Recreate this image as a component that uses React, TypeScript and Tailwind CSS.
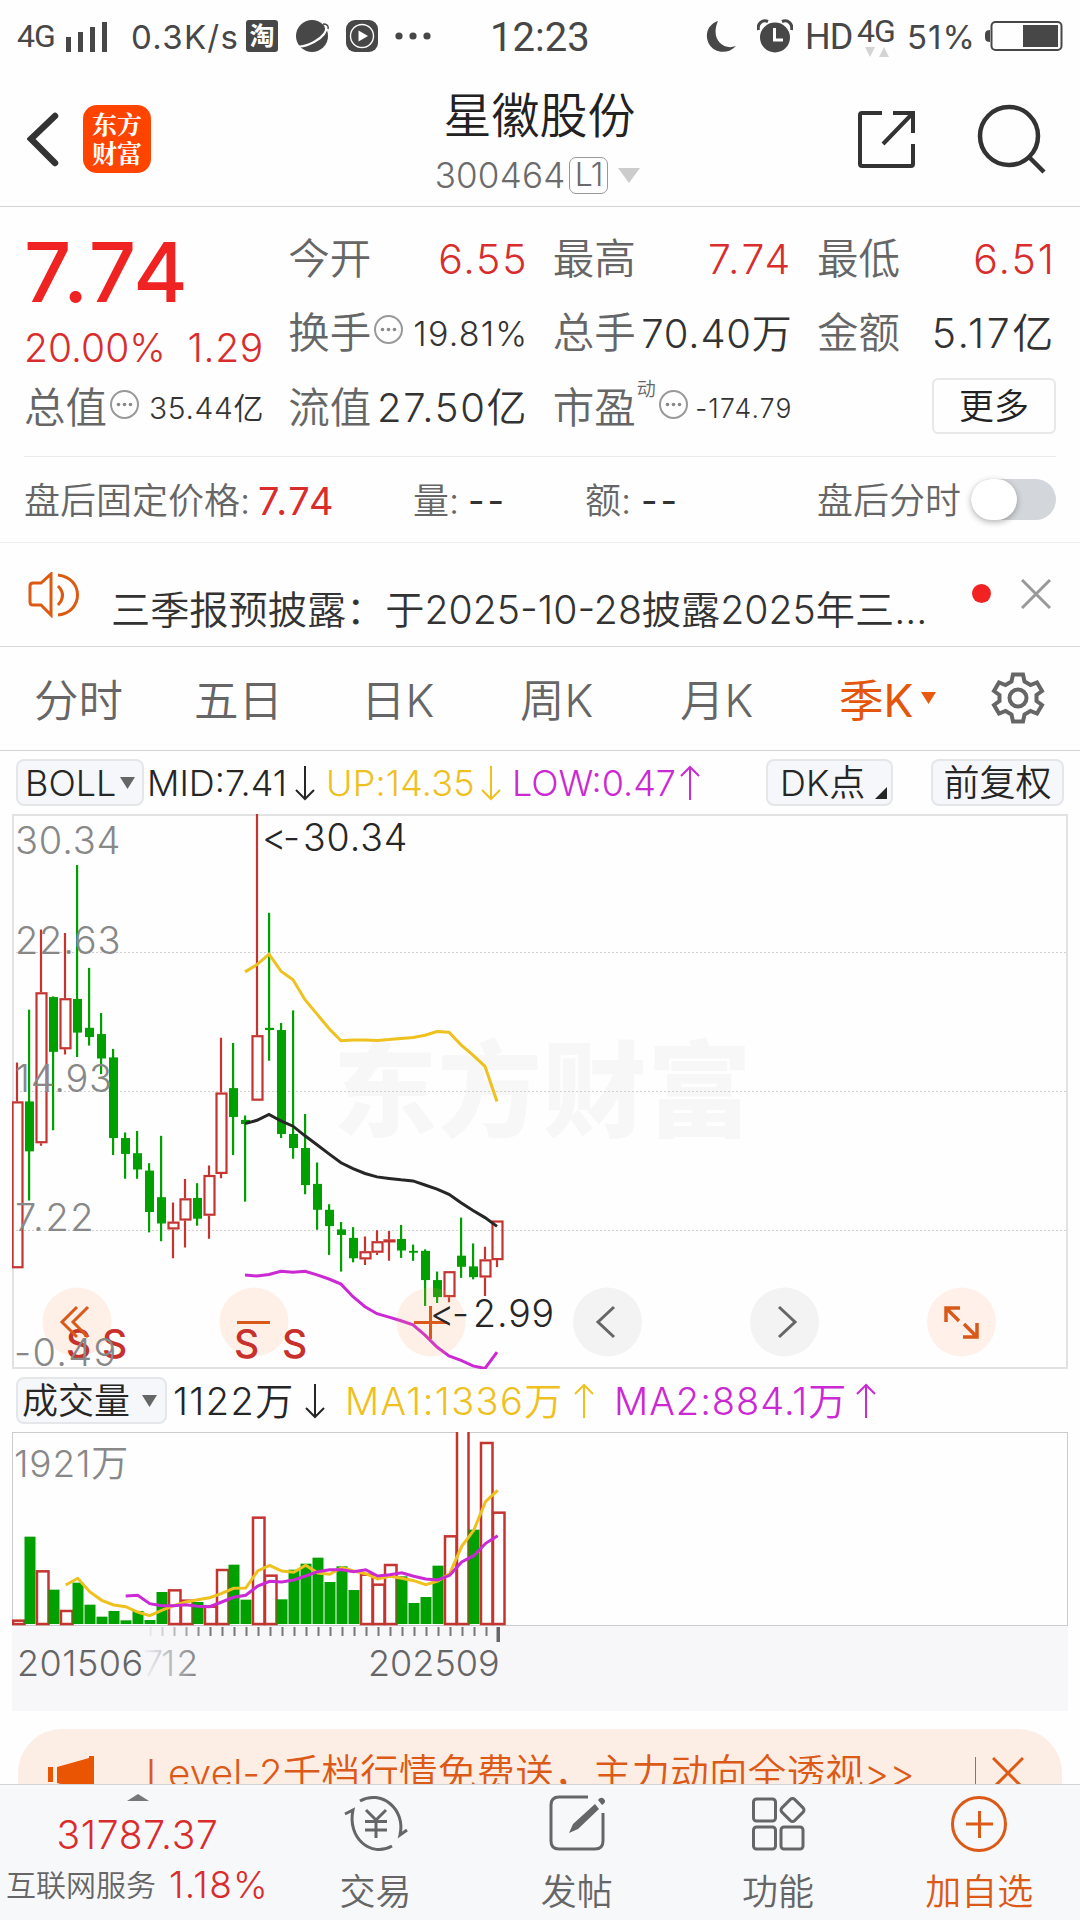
import type { ReactNode } from 'react';
import clsx from 'clsx';

const RED = '#c43431';
const GREEN = '#00a000';
const YELLOW = '#eec11f';
const PURPLE = '#cb29d3';
const ORANGE = '#d9591a';

// [up, high, body top, body bottom, low]
const CANDLES: [number, number, number, number, number][] = [
  [1, 710, 815, 1266, 1266],
  [0, 567, 815, 950, 1083],
  [1, 350, 520, 928, 935],
  [0, 531, 533, 681, 893],
  [1, 360, 536, 674, 688],
  [0, 176, 538, 629, 695],
  [0, 454, 616, 641, 664],
  [0, 576, 633, 699, 741],
  [0, 673, 696, 914, 960],
  [0, 899, 914, 957, 1024],
  [0, 895, 955, 999, 1024],
  [0, 982, 1002, 1114, 1169],
  [0, 908, 1074, 1145, 1193],
  [1, 1088, 1140, 1161, 1239],
  [1, 1025, 1077, 1137, 1210],
  [0, 1036, 1076, 1132, 1151],
  [1, 988, 1014, 1124, 1186],
  [1, 643, 791, 1011, 1023],
  [0, 657, 779, 857, 960],
  [0, 853, 865, 876, 1086],
  [1, 38, 636, 813, 813],
  [0, 305, 616, 622, 705],
  [0, 603, 622, 903, 914],
  [0, 569, 903, 941, 970],
  [0, 849, 941, 1041, 1066],
  [0, 980, 1038, 1108, 1162],
  [0, 1093, 1108, 1152, 1230],
  [0, 1141, 1161, 1176, 1275],
  [0, 1155, 1184, 1239, 1250],
  [1, 1180, 1220, 1242, 1257],
  [1, 1163, 1193, 1224, 1230],
  [1, 1165, 1188, 1195, 1246],
  [0, 1149, 1187, 1218, 1238],
  [0, 1202, 1219, 1224, 1246],
  [0, 1215, 1219, 1298, 1368],
  [0, 1275, 1298, 1344, 1360],
  [1, 1274, 1274, 1344, 1358],
  [0, 1129, 1232, 1262, 1292],
  [0, 1199, 1261, 1290, 1296],
  [1, 1208, 1242, 1291, 1341],
  [1, 1137, 1137, 1244, 1263],
];

const BOLL_START = 19;
const BOLL_UP = [465, 445, 417, 463, 486, 540, 579, 618, 651, 649, 649, 650, 648, 645, 642, 636, 626, 628, 662, 690, 720, 815];
const BOLL_MID = [875, 866, 850, 868, 882, 908, 932, 957, 981, 997, 1010, 1019, 1023, 1027, 1030, 1041, 1052, 1066, 1089, 1110, 1129, 1153];
const BOLL_LOW = [1284, 1287, 1283, 1274, 1277, 1274, 1284, 1295, 1309, 1343, 1370, 1389, 1398, 1408, 1419, 1447, 1479, 1503, 1515, 1530, 1537, 1493];

// [up, bar top]
const VOLUMES: [number, number][] = [
  [1, 750], [0, 501], [1, 602], [0, 660], [1, 721], [0, 639], [0, 705], [0, 741], [0, 724], [0, 752],
  [0, 724], [0, 751], [0, 667], [1, 659], [1, 690], [0, 697], [1, 708], [1, 598], [0, 585], [0, 690],
  [1, 441], [1, 615], [0, 689], [0, 600], [0, 582], [0, 564], [0, 637], [0, 590], [0, 661], [1, 612],
  [1, 642], [1, 583], [0, 620], [0, 700], [0, 682], [0, 588], [1, 497], [1, 180], [0, 480], [1, 217],
  [1, 426],
];
const MA1 = [646, 626, 666, 692, 706, 711, 727, 738, 722, 708, 697, 690, 684, 671, 656, 655, 604, 587, 604, 608, 587, 610, 614, 594, 604, 612, 628, 620, 626, 633, 645, 634, 612, 530, 482, 395, 362];
const MA2 = [679, 677, 702, 708, 708, 705, 710, 711, 697, 683, 677, 649, 635, 637, 631, 619, 606, 600, 600, 606, 600, 619, 615, 609, 620, 628, 631, 617, 577, 558, 521, 498];

const candleX = (i: number) => 5 + 12 * i;
const priceY = (v: number) => (v - 38) / 2.7034;
const volX = (i: number) => 5.7 + 12 * i;
const volY = (v: number) => (v - 187) / 3;

const toPoints = (values: number[], start: number, x: (i: number) => number, y: (v: number) => number) =>
  values.map((v, i) => `${x(start + i)},${y(v).toFixed(1)}`).join(' ');

function StatusBar() {
  return (
    <div className="flex h-[72px] shrink-0 items-center text-[#474747] font-normal">
      <span className="ml-[17px] w-[49px] text-[32px] tracking-[-1px] font-['Roboto']">4G</span>
      <svg width="42" height="32" className="mt-[1px] shrink-0" fill="#474747">
        <rect x="0" y="16" width="5" height="15" />
        <rect x="12" y="11" width="5" height="20" />
        <rect x="24" y="6" width="5" height="25" />
        <rect x="36" y="1" width="5" height="30" />
      </svg>
      <span className="ml-[23px] mt-[2px] w-[115px] text-[33px] tracking-[1.300px]">0.3K/s</span>
      <span className="flex size-8 items-center justify-center rounded-[3px] bg-[#474747] text-[25px] font-bold leading-none text-white">
        淘
      </span>
      <svg width="34" height="34" viewBox="0 0 34 34" className="ml-[17px] shrink-0">
        <circle cx="17" cy="17" r="16" fill="#474747" />
        <path d="M30 7c4 4-3 12-11 16S4 29 1 26" fill="none" stroke="#fff" strokeWidth="2.200" />
        <path d="M28 5q6 0 5 5" fill="none" stroke="#474747" strokeWidth="1.500" />
      </svg>
      <svg width="32" height="32" viewBox="0 0 32 32" className="ml-[17px] shrink-0">
        <rect width="32" height="32" rx="9" fill="#474747" />
        <circle cx="16" cy="16" r="11.500" fill="none" stroke="#fff" strokeWidth="1.400" />
        <path d="M12.500 10.500 22 16l-9.500 5.500z" fill="#fff" />
      </svg>
      <svg width="38" height="10" className="ml-[16px] shrink-0" fill="#474747">
        <circle cx="5" cy="5" r="3.600" />
        <circle cx="19" cy="5" r="3.600" />
        <circle cx="33" cy="5" r="3.600" />
      </svg>
      <span className="ml-[58px] w-[104px] text-[40px] font-['Roboto'] mt-[4px]">12:23</span>
      <svg width="30" height="32" viewBox="0 0 30 32" className="ml-[112px] mt-[1px] shrink-0">
        <path d="M12 0C2 3-2 14 3 23s19 11 27 2C17 30 4 18 12 0z" fill="#474747" />
      </svg>
      <svg width="36" height="34" viewBox="0 0 36 34" className="ml-[21px] shrink-0">
        <circle cx="18" cy="18.500" r="15" fill="#474747" />
        <path d="M1.500 11C0 5 5 0 11 2.500M34.500 11C36 5 31 0 25 2.500" fill="none" stroke="#474747" strokeWidth="3" />
        <path d="M17.500 9v12H26" fill="none" stroke="#fff" strokeWidth="3" />
      </svg>
      <span className="ml-[12px] w-[52px] text-[36px] tracking-[-1px] font-['Roboto'] mt-[2px]">HD</span>
      <span className="relative w-[50px] text-[32px] font-['Roboto'] tracking-[-1px] -mt-[10px]">
        4G
        <svg width="24" height="10" className="absolute left-[8px] top-[32px]" fill="#d4d4d4">
          <path d="M0 0h10l-5 10zM19 0l5 10H14z" />
        </svg>
      </span>
      <span className="mt-[2px] w-[78px] text-[33px] tracking-[1px]">51%</span>
      <svg width="78" height="32" className="shrink-0">
        <rect x="6.500" y="2" width="70" height="28" rx="4" fill="none" stroke="#474747" strokeWidth="2" />
        <path d="M5 10v12c-5 0-5-3-5-6s0-6 5-6z" fill="#474747" />
        <rect x="38" y="5" width="35" height="22" fill="#474747" />
      </svg>
    </div>
  );
}

function Header() {
  return (
    <div className="flex h-[135px] shrink-0 border-b border-[#d4d4d4] items-start">
      <svg width="34" height="56" viewBox="0 0 34 56" className="ml-[27px] mt-[39px] shrink-0">
        <path d="M28 5 4 28l24 24" fill="none" stroke="#333" strokeWidth="6.500" strokeLinecap="round" strokeLinejoin="miter" />
      </svg>
      <div className="ml-[22px] mt-[33px] flex size-[68px] flex-col items-center justify-center rounded-[14px] bg-[#ff4400] pb-[3px] text-[25px] font-bold leading-[29px] text-white font-['Noto_Serif_CJK_SC','Noto_Sans_CJK_SC',sans-serif]">
        <span>东方</span>
        <span>财富</span>
      </div>
      <div className="ml-[119px] flex w-[540px] flex-col items-center">
        <div className="mt-[14px] text-[48px] leading-[60px] text-[#222] -ml-[1px]">星徽股份</div>
        <div className="flex h-[58px] items-center pr-[5px] text-[35px] tracking-[0.200px] text-[#6b6b6b]">
          <span>300464</span>
          <span className="ml-[4px] flex h-[37px] w-[39px] items-center justify-center rounded-[7px] border-[1.500px] border-[#999] text-[32px] tracking-[-0.500px]">
            L1
          </span>
          <svg width="22" height="15" className="ml-[10px]"><path d="M0 0h22L11 15z" fill="#ccc" /></svg>
        </div>
      </div>
      <svg width="60" height="60" viewBox="0 0 60 60" className="ml-[46px] mt-[37px] shrink-0" fill="none" stroke="#333" strokeWidth="4">
        <path d="M26 4H6q-2 0-2 2v49q0 2 2 2h49q2 0 2-2V35M37 4h20v20M57 4 27 35" />
      </svg>
      <svg width="72" height="72" viewBox="0 0 72 72" className="ml-[60px] mt-[32px] shrink-0" fill="none" stroke="#333" strokeWidth="4.500">
        <circle cx="33" cy="32" r="29" />
        <path d="m53 53 15 15" />
      </svg>
    </div>
  );
}

function Info() {
  return (
    <svg width="31" height="31" viewBox="0 0 31 31" className="-mt-[8px] ml-[2px] shrink-0">
      <circle cx="15.500" cy="15.500" r="13.500" fill="none" stroke="#999" strokeWidth="2" />
      <circle cx="9.500" cy="15.500" r="1.800" fill="#888" />
      <circle cx="15.500" cy="15.500" r="1.800" fill="#888" />
      <circle cx="21.500" cy="15.500" r="1.800" fill="#888" />
    </svg>
  );
}

function Cell({ label, value, className, extra }: { label: string; value: string; className: string; extra?: ReactNode }) {
  return (
    <div className="flex h-[74.500px] items-center whitespace-nowrap">
      <span className="text-[41.500px] text-[#666]">{label}</span>
      {extra}
      <span className={clsx('ml-auto', className)}>{value}</span>
    </div>
  );
}

function Quote() {
  return (
    <div className="shrink-0 px-6">
      <div className="flex h-[250px] justify-between border-b border-[#ebebeb] pt-[15px]">
        <div className="w-[240px]">
          <div className="flex h-[101px] items-center text-[83px] font-medium tracking-[2px] text-[#f02323]">7.74</div>
          <div className="flex h-[48px] items-center justify-between text-[39px] text-[#d92d2d]">
            <span>20.00%</span>
            <span className="tracking-[0.700px]">1.29</span>
          </div>
          <Cell label="总值" value="35.44亿" className="text-[30px] tracking-[0.600px] text-[#333]" extra={<Info />} />
        </div>
        <div className="w-[240px]">
          <Cell label="今开" value="6.55" className="text-[41px] tracking-[1.800px] text-[#d92d2d]" />
          <Cell label="换手" value="19.81%" className="text-[34px] tracking-[1.200px] text-[#333]" extra={<Info />} />
          <Cell label="流值" value="27.50亿" className="text-[40px] tracking-[1.700px] text-[#333]" />
        </div>
        <div className="w-[240px]">
          <Cell label="最高" value="7.74" className="text-[41px] tracking-[2.400px] text-[#d92d2d]" />
          <Cell label="总手" value="70.40万" className="text-[40px] tracking-[0.800px] text-[#333]" />
          <Cell
            label="市盈"
            value="-174.79"
            className="text-[26.500px] tracking-[1.200px] text-[#333]"
            extra={
              <>
                <span className="-mt-[38px] ml-[1px] text-[19px] text-[#666]">动</span>
                <Info />
              </>
            }
          />
        </div>
        <div className="w-[239px]">
          <Cell label="最低" value="6.51" className="text-[41px] tracking-[2px] text-[#d92d2d]" />
          <Cell label="金额" value="5.17亿" className="text-[41px] tracking-[2.600px] text-[#333]" />
          <div className="-mt-[2px] flex h-[74px] items-center justify-end">
            <button className="h-[56px] w-[124px] rounded-[6px] border-2 border-[#e8e8e8] text-[35px] leading-none text-[#222]">更多</button>
          </div>
        </div>
      </div>
      <div className="flex h-[85px] items-center text-[36px] text-[#666] pt-[2px]">
        <span className="w-[234px]">盘后固定价格:</span>
        <span className="w-[155px] text-[38px] font-normal tracking-[1.500px] text-[#d92d2d]">7.74</span>
        <span className="w-[55px]">量:</span>
        <span className="w-[117px] font-normal tracking-[3px] text-[#333]">--</span>
        <span className="w-[56px]">额:</span>
        <span className="w-[176px] font-normal tracking-[3px] text-[#333]">--</span>
        <span>盘后分时</span>
        <span className="ml-auto -mt-[2px] flex h-[41px] w-[85px] rounded-full bg-[#d3d6db]">
          <span className="h-[41px] w-[46px] rounded-full bg-white shadow-[0_2px_6px_rgba(0,0,0,0.3)]" />
        </span>
      </div>
    </div>
  );
}

function Notice() {
  return (
    <div className="flex h-[105px] shrink-0 items-center border-y border-t-[#eee] border-b-[#d8d8d8] pl-[27px]">
      <svg width="54" height="46" viewBox="0 0 54 46" fill="none" stroke="#dc5b14" strokeWidth="3">
        <path d="M24 2v41L14 33H6q-3 0-3-3V14q0-3 3-3h8L24 2z" />
        <path d="M31 14q9 9 0 19M31 3c26 3 26 37 0 40" />
      </svg>
      <span className="ml-[30px] w-[861px] pt-[31px] text-[39.200px] text-[#333] whitespace-nowrap">
        三季报预披露：于2025-10-28披露2025年三...
      </span>
      <span className="-mt-[2px] size-[19px] rounded-full bg-[#f22222]" />
      <svg width="30" height="30" className="ml-[30px] -mt-[2px]" stroke="#999" strokeWidth="3">
        <path d="m1 1 28 28M29 1 1 29" />
      </svg>
    </div>
  );
}

function Tabs() {
  return (
    <div className="flex h-[104px] shrink-0 items-center border-b border-[#d4d4d4] pt-[6px] pl-[34px] text-[44.500px] text-[#666] whitespace-nowrap">
      <span className="w-[160px]">分时</span>
      <span className="w-[167px]">五日</span>
      <span className="w-[159px]">日K</span>
      <span className="w-[160px]">周K</span>
      <span className="w-[159px]">月K</span>
      <span className="w-[82px] font-normal text-[#e3560c]">季K</span>
      <svg width="15" height="12" className="-mt-[8px]"><path d="M0 0h15L7.500 12z" fill="#e85a0c" /></svg>
      <svg width="54" height="54" viewBox="0 0 54 54" className="ml-[55px] -mt-[7px]" fill="none" stroke="#666" strokeWidth="4">
        <circle cx="27" cy="27" r="8.500" />
        <path d="M22 3.500h10l1.500 7 6 3.500 6.500-2.500L51 20l-5.500 4v6l5.500 4-5 8.500-6.500-2.500-6 3.500-1.500 7H22l-1.500-7-6-3.500L8 42.500 3 34l5.500-4v-6L3 20l5-8.500 6.500 2.500 6-3.500z" />
      </svg>
    </div>
  );
}

function Arrow({ up, color }: { up?: boolean; color: string }) {
  return (
    <svg width="20" height="36" viewBox="0 0 20 36" className={clsx('shrink-0', up && 'rotate-180')}>
      <path d="M10 1v33M1 25l9 9 9-9" fill="none" stroke={color} strokeWidth="2" />
    </svg>
  );
}

const chip = 'flex h-[47px] items-center rounded-[8px] border-2 border-[#e4e6ea] bg-[#f6f7fa] shrink-0';

function PriceChart() {
  return (
    <div className="mx-3 h-[555px] w-[1056px] shrink-0">
      <svg width="1056" height="555" className="block">
        <text x="321" y="315" fontSize="104" fontWeight="900" letterSpacing="0.8" fill="#f7f7f7">东方财富</text>
        {[138.5, 277.5, 416.5].map((y) => (
          <path key={y} d={`M0 ${y}H1056`} stroke="#d0d0d0" strokeWidth="1" strokeDasharray="2 2" />
        ))}
        <rect x="1" y="1" width="1054" height="553" fill="none" stroke="#e2e2e2" strokeWidth="2" />
        {CANDLES.map(([up, high, top, bottom, low], i) => {
          const x = candleX(i);
          const y1 = priceY(top);
          const y2 = priceY(bottom);
          return up ? (
            <g key={i} stroke={RED} strokeWidth="2.2" fill="none">
              <path d={`M${x} ${priceY(high)}V${y1}M${x} ${y2}V${priceY(low)}`} />
              <rect x={x - 4.5} y={y1 + 1} width="10" height={Math.max(y2 - y1 - 2, 1)} />
            </g>
          ) : (
            <g key={i} fill={GREEN}>
              <rect x={x - 1} y={priceY(high)} width="2.2" height={priceY(low) - priceY(high)} />
              <rect x={x - 4} y={y1} width="9" height={y2 - y1} />
            </g>
          );
        })}
        <g fill="none" strokeWidth="3">
          <polyline points={toPoints(BOLL_UP, BOLL_START, candleX, priceY)} stroke={YELLOW} />
          <polyline points={toPoints(BOLL_MID, BOLL_START, candleX, priceY)} stroke="#262626" />
          <polyline points={toPoints(BOLL_LOW, BOLL_START, candleX, priceY)} stroke={PURPLE} />
        </g>
        <circle cx="65" cy="508" r="34.5" fill="#fca468" fillOpacity="0.15" />
        <circle cx="242" cy="508" r="34.5" fill="#fca468" fillOpacity="0.15" />
        <circle cx="419" cy="508" r="34.5" fill="#fca468" fillOpacity="0.15" />
        <circle cx="595.5" cy="508" r="34.5" fill="#f3f3f3" />
        <circle cx="772.5" cy="508" r="34.5" fill="#f3f3f3" />
        <circle cx="949.5" cy="508" r="34.5" fill="#fff1e9" />
        <g fontSize="39" fontWeight="500" fill="#c8302c">
          <text x="54" y="543.500">S</text>
          <text x="90" y="543.500">S</text>
          <text x="222" y="543.500">S</text>
          <text x="270" y="543.500">S</text>
        </g>
        <g fill="none" stroke={ORANGE} strokeWidth="3">
          <path d="m65 493-15 15 15 15M76 493l-15 15 15 15" />
          <path d="M225 508.500h33M402 508.500h33M418.500 492v33" />
          <path d="M934 508v-14h14M934 494l13 13M965 509v14h-14M965 523l-13-13" strokeWidth="3.500" />
          <path d="m602 493-16 15 16 15M767 493l16 15-16 15" stroke="#666" />
        </g>
        <g fontSize="38" fill="#888" letterSpacing="0.8">
          <text x="3" y="39.500">30.34</text>
          <text x="3" y="140">22.63</text>
          <text x="3" y="278">14.93</text>
          <text x="3" y="417" letterSpacing="1.6">7.22</text>
          <text x="2" y="552" letterSpacing="1.3">-0.49</text>
        </g>
        <g fontSize="37.5" fill="#262626" letterSpacing="0.9">
          <text x="250" y="37">&lt;<tspan x="271">-</tspan><tspan x="291">30.34</tspan></text>
          <text x="418" y="512.500">&lt;<tspan x="440">-</tspan><tspan x="461">2.99</tspan></text>
        </g>
      </svg>
    </div>
  );
}

function VolumeChart() {
  return (
    <svg width="1056" height="279" className="mx-3 block shrink-0">
      <defs>
        <linearGradient id="fade" x1="0" x2="1">
          <stop offset="0" stopColor="#f7f7fa" />
          <stop offset="1" stopColor="#f7f7fa" stopOpacity="0" />
        </linearGradient>
      </defs>
      <rect x="0" y="194" width="1056" height="85" fill="#f7f7fa" />
      <rect x="0.5" y="0.5" width="1055" height="193" fill="#fefefe" stroke="#ccc" />
      <text x="2" y="44.500" fontSize="37" letterSpacing="0.8" fill="#888">1921万</text>
      {VOLUMES.map(([up, top], i) =>
        up ? (
          <rect key={i} x={12 * i + 1} y={volY(top) + 1} width="11.5" height={192 - volY(top) - 1} fill="#fff" stroke={RED} strokeWidth="2.5" />
        ) : (
          <rect key={i} x={12 * i + 0.5} y={volY(top)} width="11" height={192 - volY(top)} fill={GREEN} />
        ),
      )}
      <g fill="none" strokeWidth="3">
        <polyline points={toPoints(MA1, 4, volX, volY)} stroke={YELLOW} />
        <polyline points={toPoints(MA2, 9, volX, volY)} stroke={PURPLE} />
      </g>
      {Array.from({ length: 29 }, (_, i) => (
        <rect key={i} x={137.5 + 12 * i} y="195" width="2" height="9" fill="#777" />
      ))}
      <rect x="484.5" y="195" width="3.5" height="15" fill="#666" />
      <g fontSize="36" fill="#666">
        <text x="131" y="243.500">7</text>
        <text x="149" y="243.500" letterSpacing="1">12</text>
        <rect x="130" y="195" width="68" height="60" fill="url(#fade)" />
        <text x="5" y="243.500" letterSpacing="0.5">201506</text>
        <text x="356" y="243.500">202509</text>
      </g>
    </svg>
  );
}

function NavItem({ label, active, children }: { label: string; active?: boolean; children: ReactNode }) {
  return (
    <div className={clsx('flex flex-1 flex-col items-center text-[36px]', active ? 'text-[#dc5a18]' : 'text-[#666]')}>
      <svg width="66" height="60" viewBox="0 0 66 60" className="mt-[8px]" fill="none" stroke="currentColor" strokeWidth="3">
        {children}
      </svg>
      <span className="mt-[12px] leading-[54px]">{label}</span>
    </div>
  );
}

export default function App() {
  return (
    <div className="flex h-[1920px] w-[1080px] flex-col overflow-hidden bg-[#fefefe] font-['Inter','Noto_Sans_CJK_SC',sans-serif] font-[350] leading-none">
      <StatusBar />
      <Header />
      <Quote />
      <Notice />
      <Tabs />
      <div className="flex h-[63px] shrink-0 items-center pl-4 text-[36px] text-[#262626] whitespace-nowrap">
        <div className={clsx(chip, 'w-[128px] pl-[7px]')}>
          BOLL
          <svg width="15" height="12" className="ml-[4px]"><path d="M0 0h15L7.500 12z" fill="#666" /></svg>
        </div>
        <span className="ml-[3px] w-[148px]">MID:7.41</span>
        <Arrow color="#262626" />
        <span className="ml-[11px] w-[155px] tracking-[0.200px]" style={{ color: YELLOW }}>UP:14.35</span>
        <Arrow color={YELLOW} />
        <span className="ml-[11px] w-[168px]" style={{ color: PURPLE }}>LOW:0.47</span>
        <Arrow up color={PURPLE} />
        <div className={clsx(chip, 'ml-[66px] w-[127px] pl-[12px]')}>
          DK点
          <svg width="12" height="12" className="ml-auto mr-[4px] mt-[20px]"><path d="M12 0v12H0z" fill="#262626" /></svg>
        </div>
        <div className={clsx(chip, 'ml-[38px] w-[133px] justify-center')}>前复权</div>
      </div>
      <PriceChart />
      <div className="flex h-[63px] shrink-0 items-center pl-4 text-[38px] text-[#262626] whitespace-nowrap">
        <div className={clsx(chip, 'w-[151px] pl-[4px] text-[36px]')}>
          成交量
          <svg width="15" height="12" className="ml-[12px]"><path d="M0 0h15L7.500 12z" fill="#666" /></svg>
        </div>
        <span className="ml-[6px] w-[132px] tracking-[1.400px]">1122万</span>
        <Arrow color="#262626" />
        <span className="ml-[20px] w-[229px] tracking-[1.400px]" style={{ color: YELLOW }}>MA1:1336万</span>
        <Arrow up color={YELLOW} />
        <span className="ml-[20px] w-[242px] tracking-[1px]" style={{ color: PURPLE }}>MA2:884.1万</span>
        <Arrow up color={PURPLE} />
      </div>
      <VolumeChart />
      <div className="mx-[18px] mt-[18px] flex h-[55px] shrink-0 items-start overflow-hidden rounded-t-[44px] bg-[#fceee5] pt-[24px] text-[38.500px] text-[#dc5a18] whitespace-nowrap">
        <svg width="46" height="36" viewBox="0 0 46 36" className="ml-[30px] mt-[3px] shrink-0" fill="#ea5504">
          <path d="M0 11h5v15H0zM9 11 41 2V0h5v36h-5L9 27z" />
        </svg>
        <span className="ml-[52px] w-[829px] leading-[40px] tracking-[0.250px]">Level-2千档行情免费送，主力动向全透视&gt;&gt;</span>
        <span className="mt-[4px] h-[40px] w-px bg-[#dc5a18]" />
        <svg width="32" height="32" className="ml-[16px] mt-[4px] shrink-0" stroke="#dc5a18" strokeWidth="3">
          <path d="m1 1 30 30M31 1 1 31" />
        </svg>
      </div>
      <div className="flex h-[136px] shrink-0 border-t border-[#d4d4d4] bg-[#f7f8fa]">
        <div className="flex w-[275px] shrink-0 flex-col items-center">
          <svg width="22" height="7" className="mt-[9px]"><path d="M0 7 11 0l11 7z" fill="#777" /></svg>
          <span className="mt-[14px] text-[39px] tracking-[0.700px] text-[#d92d2d]">31787.37</span>
          <div className="mt-[12px] flex items-center whitespace-nowrap">
            <span className="text-[30px] text-[#666]">互联网服务</span>
            <span className="ml-[13px] text-[37px] tracking-[1.300px] text-[#d92d2d]">1.18%</span>
          </div>
        </div>
        <NavItem label="交易">
          <path d="M17 8c21-12 46 8 40 34l7-5M49 53C28 65 4 45 10 17l-8 4" />
          <path d="m23 17 10 10 10-10M33 27v18M22 28.500h22M22 37h22" />
        </NavItem>
        <NavItem label="发帖">
          <path d="M44 4H15q-8 0-8 8v36q0 8 8 8h36q8 0 8-8V20" />
          <path d="m25 40 4-9 22-20 4 5-21 20zM54 7q3-4 6-1t-2 6z" fill="currentColor" stroke="none" />
        </NavItem>
        <NavItem label="功能">
          <rect x="8.5" y="6" width="22" height="22" rx="3" />
          <rect x="8.5" y="34" width="22" height="22" rx="3" />
          <rect x="36" y="34" width="22" height="22" rx="3" />
          <rect x="38.5" y="8" width="18" height="18" rx="3" transform="rotate(45 47.5 17)" />
        </NavItem>
        <NavItem label="加自选" active>
          <circle cx="33" cy="31" r="26.5" />
          <path d="M20 31h27M33.500 18v27" />
        </NavItem>
      </div>
    </div>
  );
}
